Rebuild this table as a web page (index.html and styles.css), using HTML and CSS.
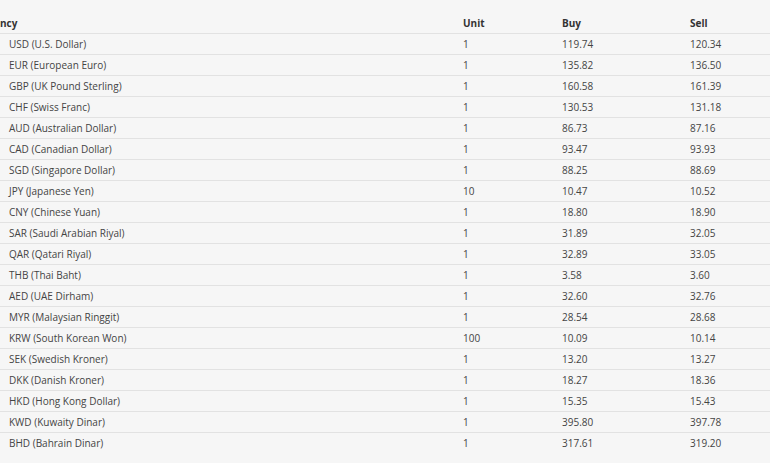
FILE: index.html
```html
<!DOCTYPE html>
<html>
<head>
<meta charset="utf-8">
<link rel="stylesheet" href="styles.css">
</head>
<body>
<table class="rates">
<thead>
<tr><th><span class="cut">Currency</span></th><th>Unit</th><th>Buy</th><th>Sell</th></tr>
</thead>
<tbody>
<tr><td>USD (U.S. Dollar)</td><td>1</td><td>119.74</td><td>120.34</td></tr>
<tr><td>EUR (European Euro)</td><td>1</td><td>135.82</td><td>136.50</td></tr>
<tr><td>GBP (UK Pound Sterling)</td><td>1</td><td>160.58</td><td>161.39</td></tr>
<tr><td>CHF (Swiss Franc)</td><td>1</td><td>130.53</td><td>131.18</td></tr>
<tr><td>AUD (Australian Dollar)</td><td>1</td><td>86.73</td><td>87.16</td></tr>
<tr><td>CAD (Canadian Dollar)</td><td>1</td><td>93.47</td><td>93.93</td></tr>
<tr><td>SGD (Singapore Dollar)</td><td>1</td><td>88.25</td><td>88.69</td></tr>
<tr><td>JPY (Japanese Yen)</td><td>10</td><td>10.47</td><td>10.52</td></tr>
<tr><td>CNY (Chinese Yuan)</td><td>1</td><td>18.80</td><td>18.90</td></tr>
<tr><td>SAR (Saudi Arabian Riyal)</td><td>1</td><td>31.89</td><td>32.05</td></tr>
<tr><td>QAR (Qatari Riyal)</td><td>1</td><td>32.89</td><td>33.05</td></tr>
<tr><td>THB (Thai Baht)</td><td>1</td><td>3.58</td><td>3.60</td></tr>
<tr><td>AED (UAE Dirham)</td><td>1</td><td>32.60</td><td>32.76</td></tr>
<tr><td>MYR (Malaysian Ringgit)</td><td>1</td><td>28.54</td><td>28.68</td></tr>
<tr><td>KRW (South Korean Won)</td><td>100</td><td>10.09</td><td>10.14</td></tr>
<tr><td>SEK (Swedish Kroner)</td><td>1</td><td>13.20</td><td>13.27</td></tr>
<tr><td>DKK (Danish Kroner)</td><td>1</td><td>18.27</td><td>18.36</td></tr>
<tr><td>HKD (Hong Kong Dollar)</td><td>1</td><td>15.35</td><td>15.43</td></tr>
<tr><td>KWD (Kuwaity Dinar)</td><td>1</td><td>395.80</td><td>397.78</td></tr>
<tr><td>BHD (Bahrain Dinar)</td><td>1</td><td>317.61</td><td>319.20</td></tr>
</tbody>
</table>
</body>
</html>
```
FILE: styles.css
```css
html, body {
  margin: 0;
  padding: 0;
  background: #f6f6f6;
}
body {
  padding-top: 12px;
  font-family: "Open Sans", "Noto Sans", sans-serif;
  font-size: 10px;
  color: #444;
}
.rates {
  border-collapse: collapse;
  width: 770px;
  table-layout: fixed;
}
.rates th, .rates td {
  text-align: left;
  padding: 0;
  height: 20px;
  line-height: 14px;
  vertical-align: middle;
  border-bottom: 1px solid #e2e2e2;
}
.rates th {
  height: 21px;
  font-weight: bold;
  color: #333;
}
.rates tbody tr:last-child td {
  border-bottom: none;
}
.rates th:first-child, .rates td:first-child {
  padding-left: 9px;
}
.rates th:first-child { width: 454px; }
.rates th:nth-child(2) { width: 99px; }
.rates th:nth-child(3) { width: 128px; }
.cut {
  display: inline-block;
  margin-left: -37px;
}
```
